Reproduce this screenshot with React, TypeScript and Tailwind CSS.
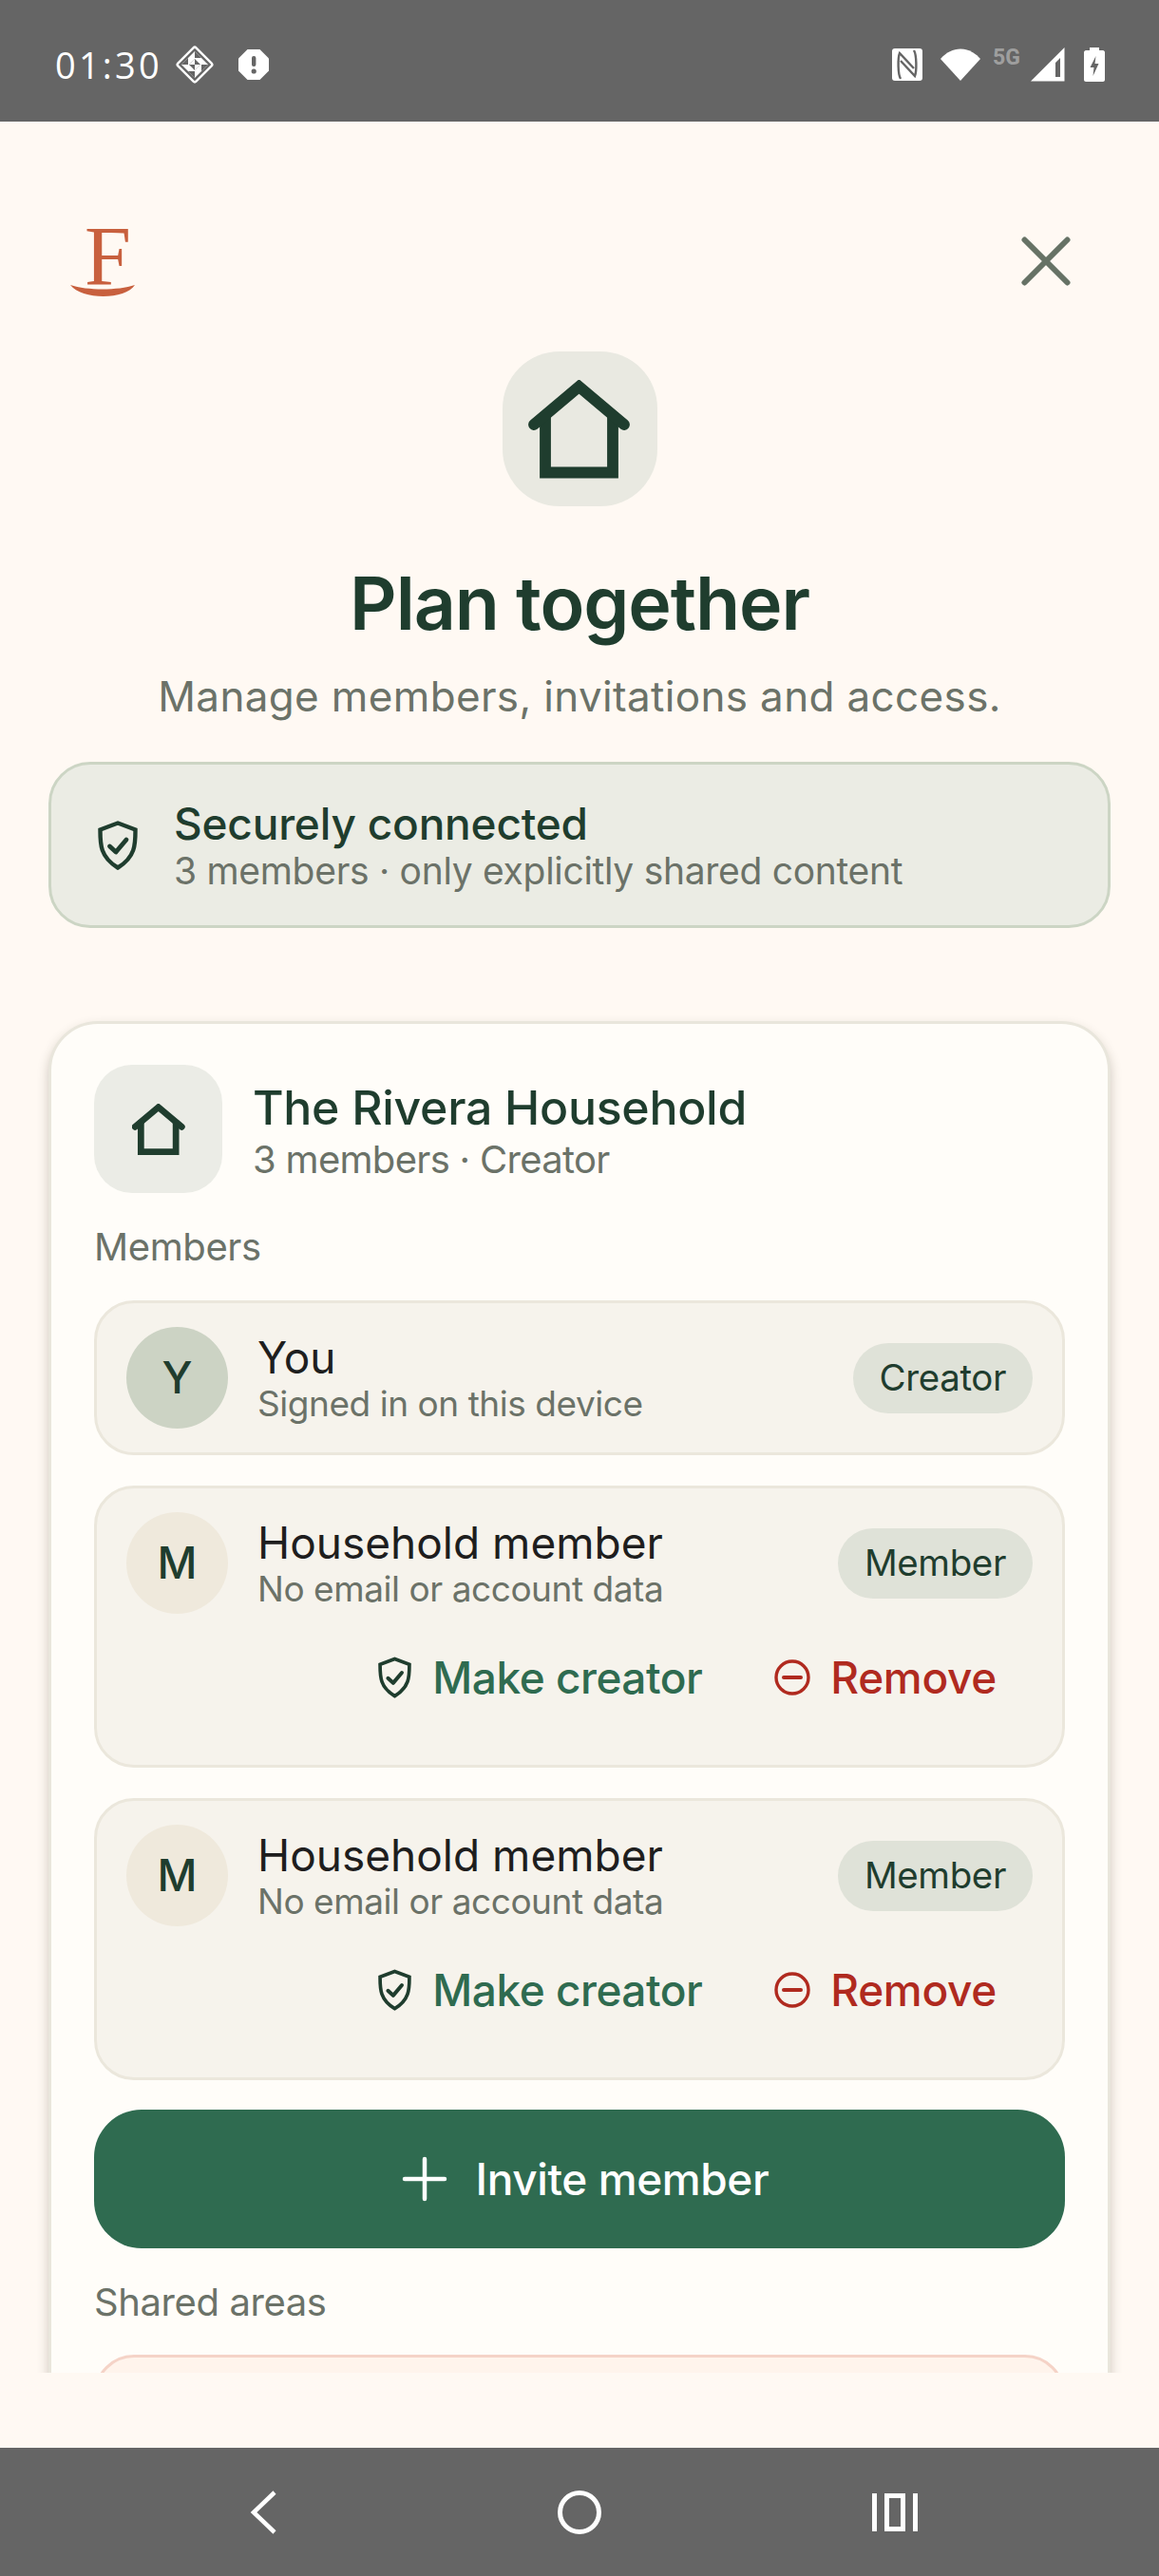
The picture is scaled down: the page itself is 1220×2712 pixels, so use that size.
import React from 'react';
import { Plus, X } from 'lucide-react';

const sans = 'font-["Inter","Open_Sans",sans-serif]';

function HomeIcon({ className, sw = 11.8 }: { className?: string; sw?: number }) {
  return (
    <svg viewBox="0 0 108 104" className={className} fill="none" stroke="currentColor" strokeWidth={sw}>
      <path d="M18 34V97.5H89V34" />
      <path d="M6 47L53.5 7L101 47" strokeLinecap="round" strokeLinejoin="miter" />
    </svg>
  );
}

function ShieldCheck({ className, sw = 4.4 }: { className?: string; sw?: number }) {
  return (
    <svg viewBox="0 0 42 52" className={className} fill="none" stroke="currentColor" strokeWidth={sw}>
      <path d="M21 2.5L39.5 9.5C39.5 24 40 38 21 49.5C2 38 2.5 24 2.5 9.5Z" strokeLinejoin="miter" />
      <path d="M12.5 27L19 33L30 20" strokeWidth={sw + 0.4} strokeLinecap="round" strokeLinejoin="round" />
    </svg>
  );
}

function StatusBar() {
  return (
    <div className="h-[128px] bg-[#656565] flex items-center text-white pl-[58px] pr-[57px] pt-[8px] shrink-0">
      <span className='text-[38px] font-["Open_Sans",sans-serif] tracking-[3.2px] leading-none w-[127px]'>01:30</span>
      {/* dnd style diamond */}
      <svg viewBox="0 0 40 40" className="w-[40px] h-[40px]" fill="none">
        <rect x="6.5" y="6.5" width="27" height="27" rx="2" transform="rotate(45 20 20)" stroke="white" strokeWidth="2.4" />
        <path d="M20 6L34 20L20 34L6 20Z" fill="white" />
        <path d="M20 6L27 13H20ZM34 20L27 27V20ZM20 34L13 27H20ZM6 20L13 13V20Z" fill="#656565" />
        <path d="M20 14L26 20L20 26L14 20Z" fill="#656565" />
        <path d="M20 14V20H14ZM26 20H20V26Z" fill="white" />
      </svg>
      <svg viewBox="0 0 32 32" className="w-[32px] h-[32px] ml-[26px]">
        <path d="M9.5 0H22.5L32 9.5V22.5L22.5 32H9.5L0 22.5V9.5Z" fill="white" />
        <rect x="14" y="7" width="4.4" height="11" rx="2" fill="#656565" />
        <circle cx="16.2" cy="23" r="2.6" fill="#656565" />
      </svg>
      <div className="flex-1" />
      <svg viewBox="0 0 32 34" className="w-[32px] h-[34px]">
        <rect width="32" height="34" rx="3" fill="white" />
        <g fill="none" stroke="#656565" strokeWidth="2.4">
          <path d="M9 32C6 27 6 10 8 5L23 21" />
          <path d="M23 2C26 7 26 24 24 29L9 13" />
        </g>
      </svg>
      <svg viewBox="0 0 42 36" className="w-[42px] h-[36px] ml-[19px]">
        <path d="M21 35L0 12C12 -2 30 -2 42 12Z" fill="white" />
      </svg>
      <span className='text-[23px] font-bold text-white/40 font-["Roboto",sans-serif] w-[33px] ml-[13px] -mt-[16px] leading-none'>5G</span>
      <svg viewBox="0 0 36 36" className="w-[36px] h-[36px] ml-[7px]">
        <path d="M0 35.5L35.5 0V35.5ZM26 31H31V11L26 16Z" fill="white" fillRule="evenodd" />
      </svg>
      <svg viewBox="0 0 22 36" className="w-[22px] h-[36px] ml-[20px]">
        <path d="M6 0H16V3H20C21 3 22 4 22 5V34C22 35 21 36 20 36H2C1 36 0 35 0 34V5C0 4 1 3 2 3H6Z" fill="white" />
        <path d="M12.5 9L6.5 21H10.5L9.5 30L15.5 17H11.5Z" fill="#656565" />
      </svg>
    </div>
  );
}

function NavBar() {
  return (
    <div className="h-[135px] bg-[#656565] flex items-center shrink-0 pl-[262px]">
      <svg viewBox="0 0 30 46" className="w-[30px] h-[46px]" fill="none" stroke="white" strokeWidth="4.5">
        <path d="M27 2L5 23L27 44" />
      </svg>
      <div className="w-[46px] h-[46px] rounded-full border-[5px] border-white ml-[295px]" />
      <svg viewBox="0 0 48 40" className="w-[48px] h-[40px] ml-[285px]" fill="none" stroke="white" strokeWidth="5">
        <path d="M2.5 0V40M45.5 0V40" />
        <rect x="15.5" y="2.5" width="17" height="35" />
      </svg>
    </div>
  );
}

function MemberRow({ letter, name, sub, role, you }: { letter: string; name: string; sub: string; role: string; you?: boolean }) {
  return (
    <div className="rounded-[42px] border-[3px] border-[#ebe7dc] bg-[#f6f3ec] pl-[31px] pr-[31px] pt-[25px] pb-[25px]">
      <div className="flex items-center">
        <div className={`w-[107px] h-[107px] rounded-full flex items-center justify-center text-[46px] font-medium text-[#1f3d2e] shrink-0 ${you ? 'bg-[#ccd3c4]' : 'bg-[#efe9dc]'}`}>
          {letter}
        </div>
        <div className="ml-[31px] flex-1 min-w-0 pt-[3px]">
          <div className="text-[46px] leading-[52px] text-[#1e1e1e]">{name}</div>
          <div className="text-[37px] leading-[46px] text-[#6b7268] tracking-[-0.45px]">{sub}</div>
        </div>
        <div className="h-[74px] px-[28px] rounded-full bg-[#dfe2d8] flex items-center text-[38.5px] text-[#1f3d2e] tracking-[-0.4px]">{role}</div>
      </div>
      {!you && (
        <div className="flex justify-end items-center h-[110px] mt-[12px] mb-[12px] pr-[38px] text-[46px] font-medium">
          <ShieldCheck className="w-[35px] h-[44px] text-[#1f3d2e]" />
          <span className="ml-[22px] text-[#2f6b50] tracking-[-0.5px]">Make creator</span>
          <svg viewBox="0 0 38 38" className="w-[38px] h-[38px] ml-[76px] text-[#b02a1f]" fill="none" stroke="currentColor" strokeWidth="3.4">
            <circle cx="19" cy="19" r="17" />
            <path d="M10 19H28" strokeWidth="4" strokeLinecap="round" />
          </svg>
          <span className="ml-[21px] text-[#b02a1f] tracking-[-0.3px]">Remove</span>
        </div>
      )}
    </div>
  );
}

export default function App() {
  return (
    <div className={`w-[1220px] h-[2712px] bg-[#fff9f3] flex flex-col overflow-hidden ${sans}`}>
      <StatusBar />
      <div className="h-[2370px] overflow-hidden px-[51px] shrink-0">
        {/* logo + close */}
        <div className="h-[110px] mt-[92px] flex items-center justify-between">
          <div className="relative w-[68px] h-[110px] ml-[23px]">
            <span className='absolute left-[15px] top-[-5px] font-["Liberation_Serif",serif] text-[88px] leading-[110px] text-[#c8603e]'>F</span>
            <svg viewBox="0 0 68 14" className="absolute left-0 top-[80px] w-[68px] h-[14px]">
              <path d="M0 0C18 6 50 6 68 0C58 16 12 16 0 0Z" fill="#c8603e" />
            </svg>
          </div>
          <X className="w-[90px] h-[90px] text-[#667265] mr-[23px]" strokeWidth={1.6} />
        </div>

        <div className="flex flex-col items-center mt-[40px]">
          <div className="w-[163px] h-[163px] rounded-[60px] bg-[#e9e9e1] flex items-center justify-center">
            <HomeIcon className="w-[108px] h-[104px] text-[#1f3d2e]" />
          </div>
          <h1 className="mt-[56px] text-[77px] leading-[92px] font-semibold text-[#1f3d2e] tracking-[-1.1px]">Plan together</h1>
          <p className="mt-[22px] text-[44px] leading-[60px] text-[#6b7268] tracking-[0.35px]">Manage members, invitations and access.</p>
        </div>

        <div className="mt-[39px] h-[175px] rounded-[44px] border-[3px] border-[#ccd5c4] bg-[#ebece4] flex items-center pl-[49px]">
          <ShieldCheck className="w-[42px] h-[52px] text-[#1f3d2e]" />
          <div className="ml-[38px]">
            <div className="text-[46px] leading-[54px] font-medium text-[#1f3d2e] tracking-[-0.2px]">Securely connected</div>
            <div className="text-[39px] leading-[46px] text-[#6b7268] tracking-[-0.3px]">3 members · only explicitly shared content</div>
          </div>
        </div>

        <div className="mt-[98px] rounded-[52px] border-[3px] border-[#e9e6dc] bg-[#fffdf9] px-[45px] pt-[43px] pb-[60px] shadow-[0_6px_12px_rgba(60,50,30,0.25)]">
          <div className="flex items-center">
            <div className="w-[135px] h-[135px] rounded-[40px] bg-[#ebece6] flex items-center justify-center shrink-0">
              <HomeIcon className="w-[56px] h-[54px] text-[#1f3d2e]" sw={13} />
            </div>
            <div className="ml-[32px] pt-[4px]">
              <div className="text-[50px] leading-[60px] font-medium text-[#1f3d2e] tracking-[-0.3px]">The Rivera Household</div>
              <div className="text-[40px] leading-[50px] text-[#6b7268] tracking-[-0.7px]">3 members · Creator</div>
            </div>
          </div>

          <div className="mt-[32px] mb-[31px] text-[40px] leading-[50px] text-[#6b7268] tracking-[-0.4px]">Members</div>

          <div className="flex flex-col gap-[32px]">
            <MemberRow letter="Y" name="You" sub="Signed in on this device" role="Creator" you />
            <MemberRow letter="M" name="Household member" sub="No email or account data" role="Member" />
            <MemberRow letter="M" name="Household member" sub="No email or account data" role="Member" />
          </div>

          <button className="mt-[31px] w-full h-[146px] rounded-[50px] bg-[#2f6b50] text-white flex items-center justify-center text-[46px] font-medium tracking-[-0.4px]">
            <Plus className="w-[72px] h-[72px] mr-[18px]" strokeWidth={1.5} />
            Invite member
          </button>

          <div className="mt-[32px] mb-[30px] text-[40px] leading-[50px] text-[#6b7268] tracking-[-0.4px]">Shared areas</div>

          <div className="h-[200px] rounded-[42px] border-[3px] border-[#f5d3c7] bg-[#fff4ec]" />
        </div>
      </div>
      <div className="flex-1" />
      <NavBar />
    </div>
  );
}
